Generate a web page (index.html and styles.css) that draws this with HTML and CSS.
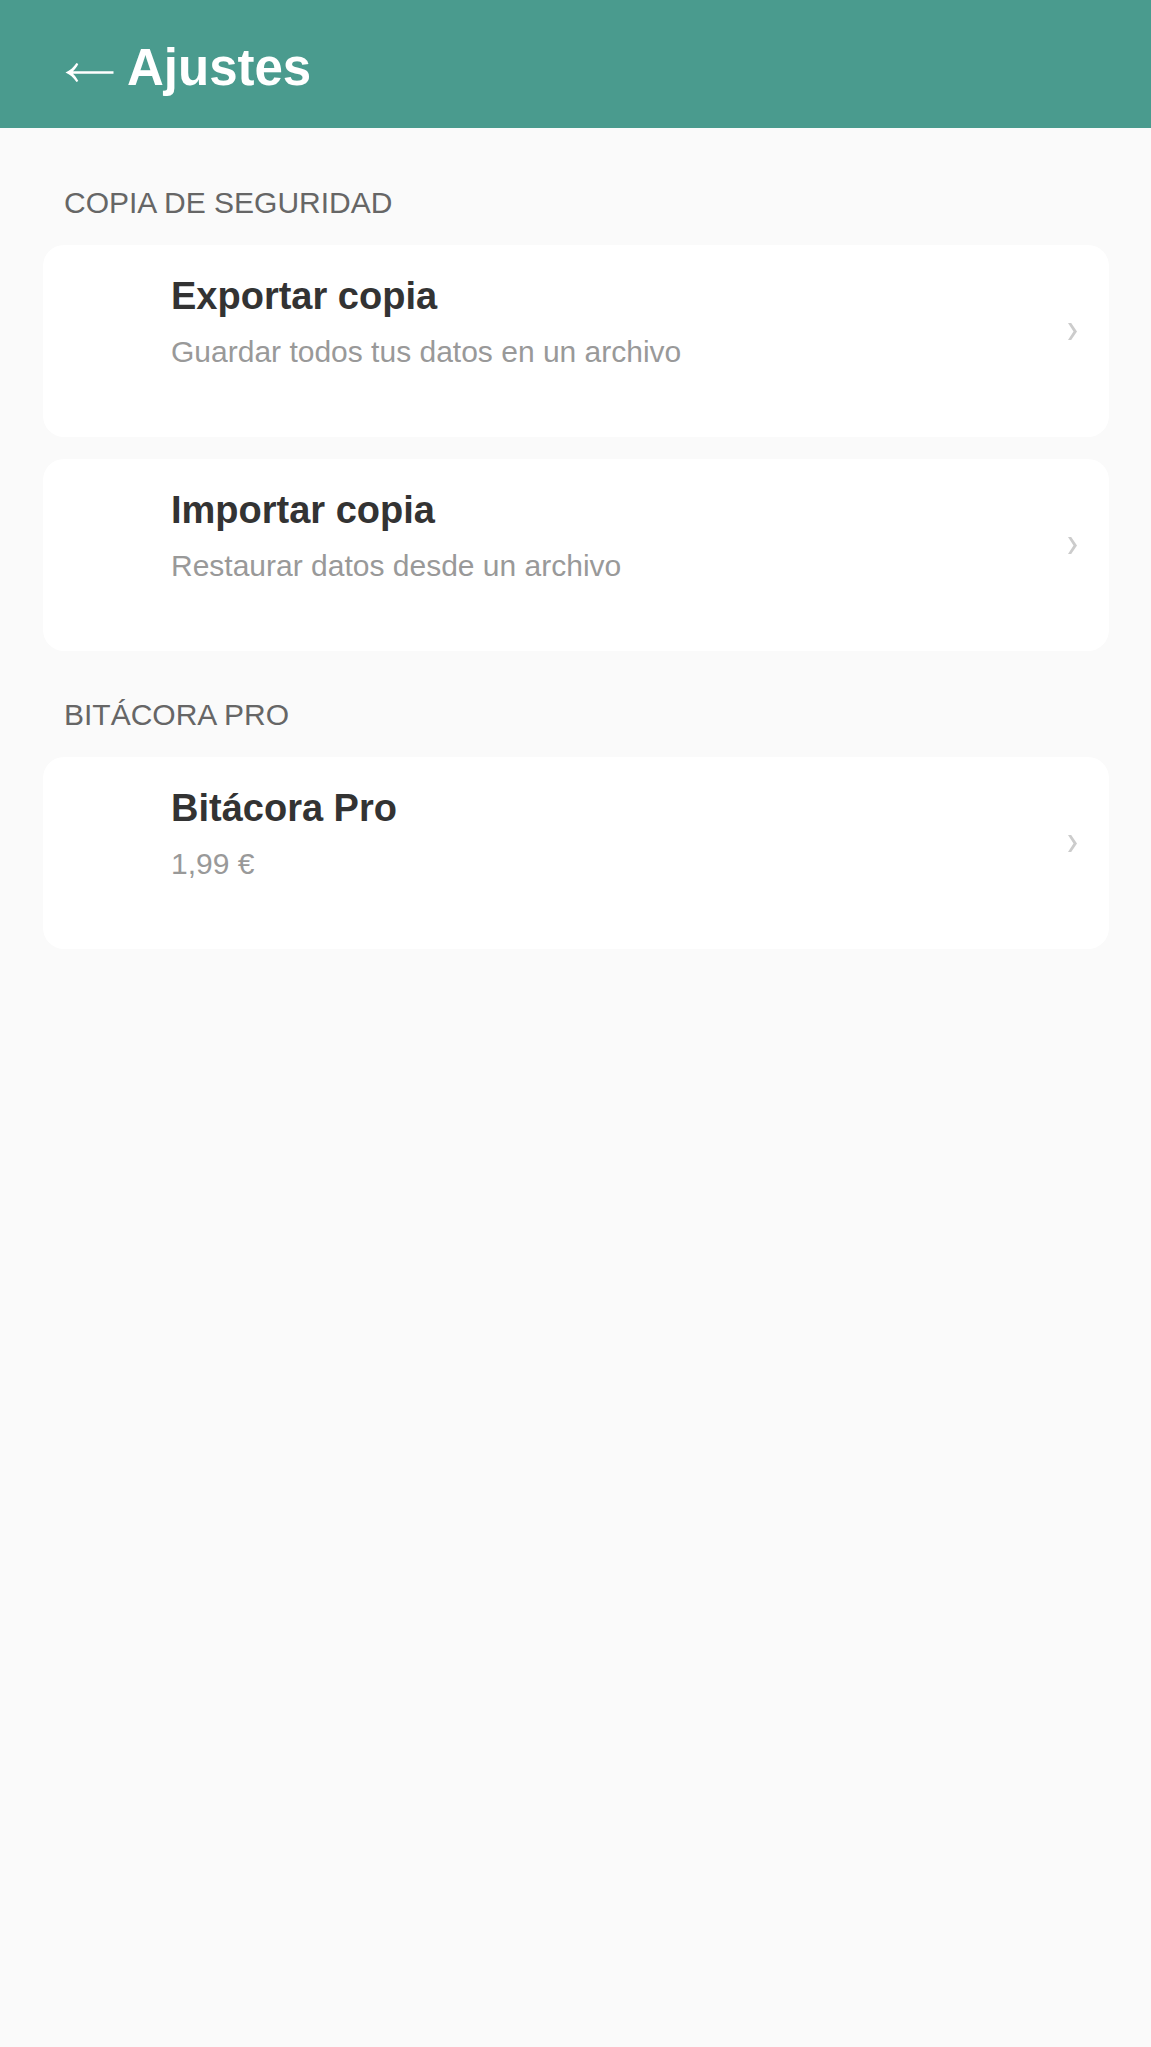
FILE: index.html
```
<!DOCTYPE html>
<html lang="es">
<head>
    <meta charset="UTF-8">
    <meta name="viewport" content="width=device-width, initial-scale=1.0">
    <title>Ajustes</title>
    <link rel="stylesheet" href="styles.css">
</head>
<body>
    <header class="header">
        <a href="#" class="back" aria-label="Volver">
            <svg width="51" height="20" viewBox="0 0 51 20" fill="currentColor">
                <path d="M1.5 9.5C6 7.5 9.5 4.5 12.5 0L14.3 1C12.8 4 11 6.500 9 8.300H49.500V10.700H9C11 12.500 12.800 15 14.300 18L12.500 19C9.500 14.500 6 11.500 1.500 9.500Z"/>
            </svg>
        </a>
        <h1>Ajustes</h1>
    </header>

    <main class="container">
        <!-- Backup -->
        <section>
            <h2 class="section-title">COPIA DE SEGURIDAD</h2>
            <div class="options">
                <button type="button" class="option">
                    <span class="icon"></span>
                    <span class="text">
                        <span class="name">Exportar copia</span>
                        <span class="info">Guardar todos tus datos en un archivo</span>
                    </span>
                    <svg class="arrow" width="9" height="17" viewBox="0 0 9 17" fill="currentColor">
                        <path d="M0 0H3.2L9 8.5L3.2 17H0L5.5 8.5Z"/>
                    </svg>
                </button>
                <button type="button" class="option">
                    <span class="icon"></span>
                    <span class="text">
                        <span class="name">Importar copia</span>
                        <span class="info">Restaurar datos desde un archivo</span>
                    </span>
                    <svg class="arrow" width="9" height="17" viewBox="0 0 9 17" fill="currentColor">
                        <path d="M0 0H3.2L9 8.5L3.2 17H0L5.5 8.5Z"/>
                    </svg>
                </button>
            </div>
        </section>

        <!-- Pro version -->
        <section>
            <h2 class="section-title">BITÁCORA PRO</h2>
            <div class="options">
                <button type="button" class="option">
                    <span class="icon"></span>
                    <span class="text">
                        <span class="name">Bitácora Pro</span>
                        <span class="info">1,99 €</span>
                    </span>
                    <svg class="arrow" width="9" height="17" viewBox="0 0 9 17" fill="currentColor">
                        <path d="M0 0H3.2L9 8.5L3.2 17H0L5.5 8.5Z"/>
                    </svg>
                </button>
            </div>
        </section>
    </main>
</body>
</html>
```
FILE: styles.css
```
*{
    box-sizing: border-box;
}
body{
    margin: 0;
    min-height: 100vh;
    background-color: #fafafa;
    font-family: "Liberation Sans", Arial, Helvetica, sans-serif;
}
.header{
    display: flex;
    align-items: center;
    gap: 12px;
    padding: 39px 64px 31px;
    background-color: #4a9b8e;
    color: #fff;
    line-height: 58px;
}
.header h1{
    margin: 0;
    font-size: 51px;
}
.back{
    display: flex;
    padding-top: 10px;
    color: #fff;
}
.container{
    padding: 11px 42px 11px 43px;
}
.section-title{
    margin: 0;
    padding: 47px 21px 25px;
    color: #666;
    font-size: 30px;
    font-weight: normal;
    line-height: 34px;
}
.options{
    display: flex;
    flex-direction: column;
    gap: 22px;
}
.option{
    display: flex;
    align-items: flex-start;
    gap: 32px;
    width: 100%;
    padding: 29px 32px;
    border: none;
    border-radius: 21px;
    background-color: #fff;
    font-family: inherit;
    text-align: left;
    cursor: pointer;
}
/* space kept for the option icon */
.icon{
    width: 64px;
    height: 134px;
}
.text{
    display: flex;
    flex: 1;
    flex-direction: column;
    gap: 17px;
}
.name{
    color: #333;
    font-size: 38px;
    font-weight: bold;
    line-height: 44px;
}
.info{
    color: #999;
    font-size: 30px;
    line-height: 34px;
}
.arrow{
    margin-top: 49px;
    color: #ccc;
}
```
